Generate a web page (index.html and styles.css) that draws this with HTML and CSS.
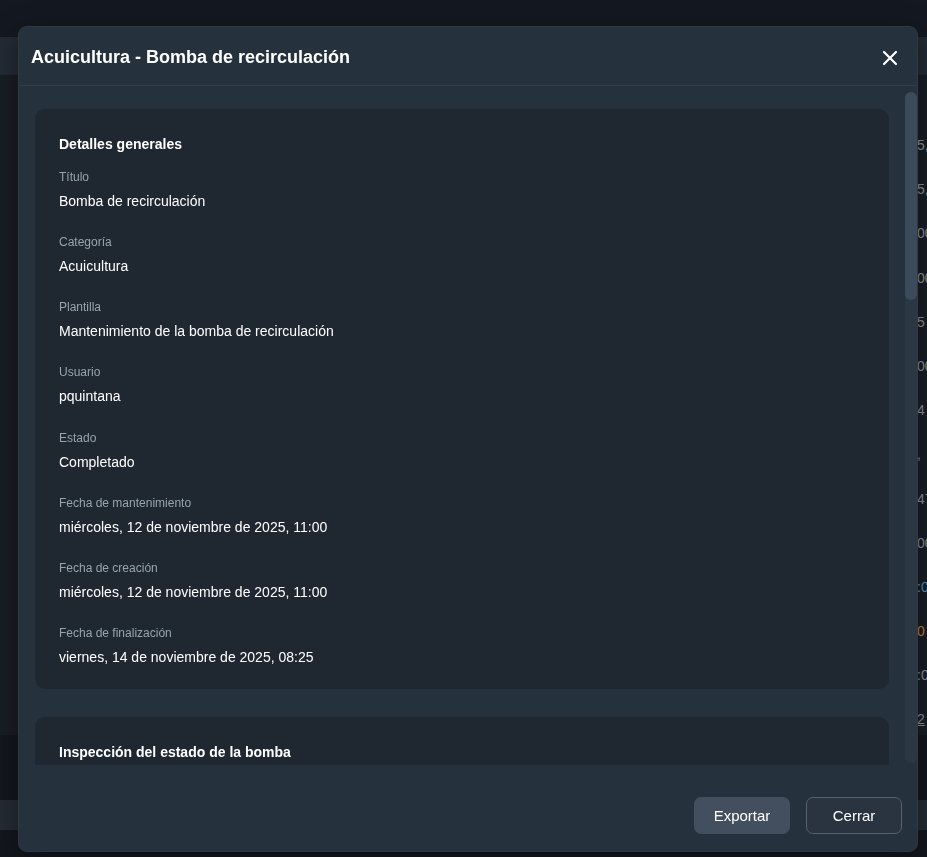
FILE: index.html
```html
<!DOCTYPE html>
<html lang="es">
<head>
    <meta charset="UTF-8">
    <meta name="viewport" content="width=device-width, initial-scale=1.0">
    <title>Mantenimientos</title>
    <link rel="stylesheet" href="styles.css">
</head>
<body>
    <div class="backdrop">
        <div class="bg-top"></div>
        <div class="bg-toolbar"></div>
        <div class="bg-table">
            <div class="bg-row">5,<span class="blue">2</span></div>
            <div class="bg-row">5,<span class="blue">8</span></div>
            <div class="bg-row">00</div>
            <div class="bg-row">00</div>
            <div class="bg-row">5</div>
            <div class="bg-row">00</div>
            <div class="bg-row">4</div>
            <div class="bg-row">,</div>
            <div class="bg-row">47</div>
            <div class="bg-row">00</div>
            <div class="bg-row">:<span class="blue">0</span></div>
            <div class="bg-row"><span class="orange">0</span></div>
            <div class="bg-row">:0</div>
            <div class="bg-row"><span class="under">2</span></div>
        </div>
        <div class="bg-gap"></div>
        <div class="bg-pager"></div>
    </div>

    <div class="modal">
        <div class="modal-header">
            <h1>Acuicultura - Bomba de recirculación</h1>
            <button class="close-button" aria-label="Cerrar">
                <svg width="16" height="16" viewBox="0 0 16 16">
                    <path d="M2 2 L14 14 M14 2 L2 14" stroke="#fff" stroke-width="2.2" stroke-linecap="round"/>
                </svg>
            </button>
        </div>

        <div class="modal-body">
            <div class="scroll-content">
                <div class="card">
                    <h2>Detalles generales</h2>
                    <div class="field">
                        <div class="label">Título</div>
                        <div class="value">Bomba de recirculación</div>
                    </div>
                    <div class="field">
                        <div class="label">Categoría</div>
                        <div class="value">Acuicultura</div>
                    </div>
                    <div class="field">
                        <div class="label">Plantilla</div>
                        <div class="value">Mantenimiento de la bomba de recirculación</div>
                    </div>
                    <div class="field">
                        <div class="label">Usuario</div>
                        <div class="value">pquintana</div>
                    </div>
                    <div class="field">
                        <div class="label">Estado</div>
                        <div class="value">Completado</div>
                    </div>
                    <div class="field">
                        <div class="label">Fecha de mantenimiento</div>
                        <div class="value">miércoles, 12 de noviembre de 2025, 11:00</div>
                    </div>
                    <div class="field">
                        <div class="label">Fecha de creación</div>
                        <div class="value">miércoles, 12 de noviembre de 2025, 11:00</div>
                    </div>
                    <div class="field">
                        <div class="label">Fecha de finalización</div>
                        <div class="value">viernes, 14 de noviembre de 2025, 08:25</div>
                    </div>
                </div>

                <div class="card">
                    <h2>Inspección del estado de la bomba</h2>
                    <div class="field">
                        <div class="label">Ruido o vibración anormal</div>
                        <div class="value">No</div>
                    </div>
                    <div class="field">
                        <div class="label">Fugas en sellos y conexiones</div>
                        <div class="value">No</div>
                    </div>
                    <div class="field">
                        <div class="label">Temperatura del motor</div>
                        <div class="value">Normal</div>
                    </div>
                </div>
            </div>
            <!-- the headless browser hides native scrollbars, so draw one -->
            <div class="scrollbar">
                <div class="scroll-thumb"></div>
            </div>
        </div>

        <div class="modal-footer">
            <button class="btn btn-secondary">Exportar</button>
            <button class="btn btn-outline">Cerrar</button>
        </div>
    </div>
</body>
</html>
```

FILE: styles.css
```css
html, body {
    margin: 0;
    padding: 0;
    height: 100%;
    overflow: hidden;
    font-family: "Liberation Sans", Arial, sans-serif;
    background: #13171d;
    color: #fff;
}

/* page behind the modal */
.backdrop {
    display: flex;
    flex-direction: column;
    height: 100%;
}

.bg-top {
    height: 37px;
    background: #141820;
}

.bg-toolbar {
    height: 38px;
    background: #232b35;
}

.bg-table {
    height: 660px;
    background: #191e25;
    padding-top: 70px;
    box-sizing: border-box;
}

.bg-row {
    height: 44.2px;
    padding-left: 917px;
    font-size: 14px;
    line-height: 0;
    color: #8a9196;
    white-space: nowrap;
}

.bg-row .blue {
    color: #4f8fb8;
}

.bg-row .orange {
    color: #b9803f;
}

.bg-row .under {
    text-decoration: underline;
}

.bg-gap {
    height: 65px;
    background: #13171d;
}

.bg-pager {
    height: 30px;
    background: #252c34;
}

/* modal */
.modal {
    position: fixed;
    top: 26px;
    left: 18px;
    width: 900px;
    height: 826px;
    box-sizing: border-box;
    background: #26313e;
    border: 1px solid #2e3946;
    border-radius: 9px;
    display: flex;
    flex-direction: column;
    overflow: hidden;
    box-shadow: 0 8px 30px rgba(0, 0, 0, 0.4);
}

.modal-header {
    height: 59px;
    flex-shrink: 0;
    display: flex;
    align-items: center;
    justify-content: space-between;
    padding: 2px 16px 0 12px;
    box-sizing: border-box;
    border-bottom: 1px solid #313c49;
}

.modal-header h1 {
    margin: 0;
    font-size: 18px;
    font-weight: bold;
    color: #fff;
}

.close-button {
    background: none;
    border: none;
    padding: 0;
    width: 22px;
    height: 22px;
    margin-top: 2px;
    display: flex;
    align-items: center;
    justify-content: center;
    cursor: pointer;
}

.modal-body {
    flex: 1;
    display: flex;
    overflow: hidden;
}

.scroll-content {
    flex: 1;
    overflow: hidden;
    padding: 23px 16px 0 16px;
}

.scrollbar {
    width: 12px;
    flex-shrink: 0;
    margin: 6px 0 2px;
    background: #2c3744;
    border-radius: 6px;
}

.scroll-thumb {
    height: 208px;
    background: #3d4a59;
    border-radius: 6px;
}

.card {
    background: #1f2731;
    border-radius: 10px;
    padding: 25px 24px 22px;
    margin-bottom: 28px;
}

.card h2 {
    margin: 0 0 15px;
    font-size: 14px;
    line-height: 20px;
    font-weight: bold;
    color: #fff;
}

.field {
    margin-bottom: 23.15px;
}

.field:last-child {
    margin-bottom: 0;
}

.label {
    font-size: 12px;
    line-height: 16px;
    color: #97a5ad;
    margin-bottom: 6px;
}

.value {
    font-size: 14px;
    line-height: 20px;
    color: #fff;
}

.modal-footer {
    height: 86px;
    flex-shrink: 0;
    display: flex;
    justify-content: flex-end;
    align-items: flex-start;
    gap: 16px;
    padding: 32px 15px 0;
    box-sizing: border-box;
}

.btn {
    width: 96px;
    height: 37px;
    border-radius: 7px;
    font-family: "Liberation Sans", Arial, sans-serif;
    font-size: 15px;
    color: #fff;
    cursor: pointer;
}

.btn-secondary {
    background: #434f5e;
    border: 1px solid #434f5e;
}

.btn-outline {
    background: #2a3441;
    border: 1px solid #56626f;
}
```
